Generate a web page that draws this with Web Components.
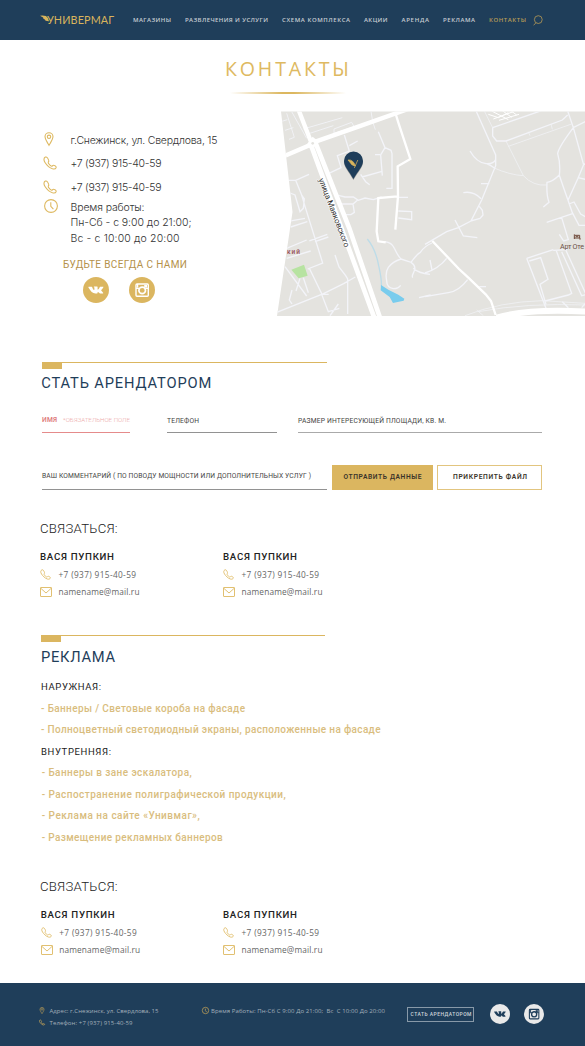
<!DOCTYPE html>
<html lang="ru">
<head>
<meta charset="utf-8">
<title>Универмаг — Контакты</title>
<style>
html,body{margin:0;padding:0}
body{width:585px;background:#fff;font-family:Roboto,"Liberation Sans",sans-serif;color:#333;overflow-x:hidden}
</style>
</head>
<body>
<site-header></site-header>
<page-title>КОНТАКТЫ</page-title>
<contact-info></contact-info>
<section-heading style="--top:46px;--x:42px;--w:285px" width="170">СТАТЬ АРЕНДАТОРОМ</section-heading>
<lease-form></lease-form>
<contact-block style="--top:28px"></contact-block>
<section-heading style="--top:35px;--x:41px;--w:284px;--gap:5px;--tx:0" width="74">РЕКЛАМА</section-heading>
<ad-list></ad-list>
<contact-block style="--top:28px;--shift:.7px"></contact-block>
<site-footer></site-footer>

<script>
const define = (name, html, init) => customElements.define(name, class extends HTMLElement {
  constructor() {
    super();
    const t = document.createElement('template');
    t.innerHTML = html;
    this.attachShadow({mode: 'open'}).append(t.content.cloneNode(true));
  }
  connectedCallback() { if (init) init(this, this.shadowRoot); }
});
const line = (text, width, cls = '') => `<tracked-text width="${width}" class="${cls}">${text}</tracked-text>`;

define('site-header', `
<style>
:host{display:flex;height:40px;box-sizing:border-box;padding-left:40px;background:#1f3e5a;align-items:center}
.logo{display:flex;width:74px;height:12px;margin-right:19px;align-items:center;color:#d9b45c;font:400 10.800px/12px Lato,sans-serif}
.logo svg{width:11px;height:9px;margin-right:-4px;margin-top:-2px}
nav{display:flex;gap:14px;font:600 6px/10px "Open Sans",sans-serif;color:#c5ccd2;width:400px}
.on{color:#b79b57}
svg.s{width:10px;height:11px}
</style>
<div class="logo"><svg viewBox="0 0 11 9"><path d="M0 .7Q3 .4 6 .9 8.500 2.400 9 6.300 5.500 6.500 4.300 4.600L5.300 4.600Q3.200 3.800 2.600 2.500L3.700 2.600Q1.700 1.500 0 .7Z" fill="#d9b45c"/></svg>${line('УНИВЕРМАГ', 67)}</div>
<nav>${line('МАГАЗИНЫ',38)}${line('РАЗВЛЕЧЕНИЯ И УСЛУГИ',83)}${line('СХЕМА КОМПЛЕКСА',68)}${line('АКЦИИ',23.500)}${line('АРЕНДА',27.500)}${line('РЕКЛАМА',32)}${line('КОНТАКТЫ',37,'on')}</nav>
<svg class="s" viewBox="0 0 10 11" fill="none" stroke="#b79b57" stroke-width=".8"><circle cx="5.300" cy="4.600" r="3.900"/><path d="M3 7.700.6 10.300"/></svg>`);

define('page-title', `
<style>
:host{display:block;height:71px;padding-top:16px;box-sizing:border-box}
.t{display:flex;justify-content:center;font:400 19.600px/26px "Open Sans",sans-serif;color:#deb961;padding-right:11px}
i{display:block;width:116px;height:2px;margin:10px 0 0 230px;background:linear-gradient(90deg,#fff,#dcb75f 45%,#dcb75f 55%,#fff)}
</style><div class="t"><tracked-text width="124"><slot></slot></tracked-text></div><i></i>`);

const icons = {
  pin: ['0 0 10 14', '<path d="M5 13.300C3 9.800 1 7.500 1 4.800a4 4 0 0 1 8 0C9 7.500 7 9.800 5 13.300Z"/><circle cx="5" cy="4.800" r="1.700"/>'],
  phone: ['0 0 14 14', '<path d="M2.400 1.100C.6 2 .5 4.200 2 6.500s4.300 5.300 7.500 6.300c1.800.5 3.200-.1 3.700-1.300.2-.8-.6-1.400-1.600-1.900-1-.6-1.700-.4-2.200.3-.4.7-1.200.4-2.400-.7C5.700 7.900 4.900 6.900 5.200 6.100c.6-.4.9-.8.5-1.700C5 2.400 3.900.4 2.400 1.100Z"/>'],
  clock: ['0 0 14 14', '<circle cx="7" cy="7" r="6.400"/><path d="M6.800 3.300v4l2.600 2.800"/>'],
  mail: ['0 0 12 10', '<rect x=".5" y=".5" width="11" height="9" rx=".4"/><path d="m.8 1.300 5.200 4.700 5.200-4.700"/>']
};
define('ui-icon', `<style>:host{display:block;width:14px;height:14px;color:#deb961}svg{display:block;width:100%;height:100%;overflow:visible}</style>`, (el, root) => {
  const [box, body] = icons[el.getAttribute('name')];
  root.innerHTML += `<svg viewBox="${box}" fill="none" stroke="currentColor" stroke-width="${el.getAttribute('stroke') || 1.1}">${body}</svg>`;
});

define('social-badge', `<style>
:host{display:block;width:26px;height:26px;border-radius:50%;background:var(--bg,#dbb660)}
svg{display:block;width:100%;height:100%;color:var(--fg,#fff)}
</style>`, (el, root) => {
  const vk = `<path fill="currentColor" d="M6 9.700h2.700c.3 0 .4.200.5.500.6 1.600 1.500 2.900 1.900 2.900.3 0 .3-.3.300-.8v-1.500c0-.6-.3-.7-.7-.9.2-.4.5-.5 1.100-.5h2.200c.5 0 .6.200.600.700v2.200c0 .3.100.5.400.3.600-.4 1.300-1.500 1.700-2.400.2-.4.4-.5.700-.5H20c.6 0 .5.4.1 1-.5.900-1.200 1.700-1.800 2.400-.2.300-.2.400.1.700.6.600 1.300 1.200 1.700 1.900.3.500.1.800-.4.800h-2.400c-.6 0-.8-.3-1.200-.7-.5-.5-.9-1-1.200-.9-.4.1-.3.700-.4 1.100-.1.400-.300.500-.800.500h-1.300c-2.700 0-4.900-2.500-6.800-5.800-.3-.5-.3-1 .4-1Z"/>`;
  const ig = `<rect x="7" y="7" width="12.300" height="12.300" rx="1" fill="none" stroke="currentColor" stroke-width="1.400"/><circle cx="13.200" cy="13.400" r="3.300" fill="none" stroke="currentColor" stroke-width="1.700"/><path stroke="currentColor" stroke-width="1.300" d="M7 11.300h3.300M16.200 11.300h3M8.600 7v3.500"/><path d="M15.200 8h2.800v2.600h-2.800z" fill="currentColor"/>`;
  root.innerHTML += `<svg viewBox="0 0 26 26">${el.getAttribute('name') === 'vk' ? vk : ig}</svg>`;
});

define('contact-info', `
<style>
:host{display:grid;grid-template-columns:277px 308px;height:205px}
.l{padding:20px 0 0 43px;font:300 10.500px/20px Inter,"Open Sans",sans-serif;color:#333}
.r{display:grid;grid-template-columns:27.500px 1fr;height:23.300px}
.r ui-icon{margin-top:2px}
.r ui-icon[name=pin]{width:10px;margin:1px 0 0 1px}
.r.h{height:48px;line-height:15.400px;margin-top:-1px}
.r.h ui-icon{margin:-1px 0 0 1px}
.s{font:400 10px/14px Roboto,sans-serif;color:#b4914a;padding-left:20px;margin-top:10px}
.b{display:flex;gap:20px;padding:5px 0 0 40px}
</style>
<div class="l">
<div class="r"><ui-icon name="pin"></ui-icon>${line('г.Снежинск, ул. Свердлова, 15',147)}</div>
<div class="r"><ui-icon name="phone"></ui-icon>${line('+7 (937) 915-40-59',91)}</div>
<div class="r"><ui-icon name="phone"></ui-icon>${line('+7 (937) 915-40-59',91)}</div>
<div class="r h"><ui-icon name="clock"></ui-icon><div>${line('Время работы:',74)}${line('Пн-Сб - с 9:00 до 21:00;',121)}${line('Вс - с 10:00 до 20:00',109)}</div></div>
<div class="s">${line('БУДЬТЕ ВСЕГДА С НАМИ',124)}</div>
<div class="b"><social-badge name="vk"></social-badge><social-badge name="ig"></social-badge></div>
</div>
<area-map></area-map>`);

define('area-map', `
<style>:host{display:block;height:205px}svg{display:block;width:308px;height:205px}</style>
<svg viewBox="0 0 308 205">
<defs><clipPath id="c"><path d="M4 .5H308V205H0L15.500 101Z"/></clipPath></defs>
<g clip-path="url(#c)">
<rect width="308" height="205" fill="#e4e3df"/>
<g transform="translate(-7,-6) scale(.33333)" fill="none" stroke="#f3f4f9" stroke-width="4">
<path stroke-width="2.500" d="M50 25 65 72 73 97 57 103M32 50l20-6M45 76l25-8M65 20 110 100M100 72 217 38M110 88 190 62M192 85V72L245 52 255 70M192 85 250 66 247 78M290 58 308 50 303 18M308 50l8 24"/>
<path d="M223 90 238 138 202 152 213 188 175 206M238 122l25-14M325 80 345 128 332 150 337 212M315 149h15M345 128l18 8 3 10V250h-17M272 208l15 22 12 9M276 216l60-17M55 226h22l40-18M77 226l18 44 10 34 53 170-45 18M95 270l8 12-3 28-10 10-15-50-15-6M50 350l55-10M62 366l50-16M118 408l54-20M135 410l40-14M50 430l60-25M50 460l72-22M45 485l65 88M90 520l-12 38M100 518l15 45M66 555l-8 30 8 12M118 490l38 78 65-32 35-20M20 622 155 568 175 620 208 610M158 568h18M180 632l25-35M195 450l12 36 20 26 6 10v105M205 271l20 5h25l15 10 20-7 25 5 25-8M213 297h36l14-12M249 297l4 25-10 7h-22M385 318l40 2v24l-40-5M380 277h34M345 410q20 2 28 20 12 25 20 32-25 8-38 25-10 15-5 40 0 20 20 24 15 0 22-10M393 462l30 10q18-25 28-30 14-20 35-28M423 472q18 12 8 30-6 12-3 16M430 490q15 15 50 18M447 578l35-8"/>
<path stroke="#fff" stroke-width="7" d="M378 30l8 26 35 106-38 22 1 90-8 100M382 274l-57 5-5 100 5 30 22 3"/>
<path stroke="#fff" stroke-width="13" d="M45 152 115 122 M130 112 265 65 420 10M80 0 122 108"/>
<path stroke="#fff" stroke-width="32" d="M118 108 136 122"/>
<path stroke="#fff" stroke-width="14" d="M120 112 315 644M136 112 238 370 332 644"/>
<path stroke="#bddce8" d="M292 402q25 30 34 80 10 45 8 62"/>
<path fill="#79cced" stroke="none" d="m333 540 22 14 30 15 18 12-2 6-32 7-10-18-27-20Z"/>
<path fill="#b7e3a1" stroke="none" d="m64 494 38-15 11 33-27 8Z"/>
<circle cx="128" cy="115" r="4" fill="#e4e3df" stroke="none"/>
</g>
<g transform="translate(148,-6) scale(.33333)" fill="none" stroke="#f3f4f9" stroke-width="4">
<path d="M152 15 212 150V182L170 285 138 348 165 340 174 330 172 316 163 304M135 138q20 35 48 38 22 2 29-12M185 176q14 6 22 12M168 236h25M115 263q30-6 53 18M90 345l25 48 42 5M138 348l-38 20-35 12-65 38M65 460Q42 490 0 504M15 465l6 30M128 524Q100 560 70 563L0 575M163 545h20M203 68 398 0M203 68v25l12 15h28L412 45l16-15M427 15 445 68 485 48M445 68q-45 60-47 78 9 30 5 65 10 30 25 72l14 40 20 38h20M445 68l30 108 10 4M477 176l-18 44-30 66M459 218l26 6M365 352l80-27M432 297l15-6 20 36 18 10M403 210q-20 20-37 22-2 38 6 60l-17 14M410 338l20 66-14 4-13-20M385 436l42-2M305 460l80-26M305 460l58 150M313 468l34-10 22 65-24 15 18 60M360 588l70-18 10-5-46-128M410 440l60 132 20-5M420 430l65 142M412 590l18 18M470 608l10-12"/>
<path stroke-width="2" d="M178 18l26 52M243 108l52 104M250 124 440 57M310 80l5 12M378 57l4 16M205 188q50 22 90 24 30 32 70 28M120 632q105-42 232-45l128 8M155 615l20 17M160 620q145-27 325-20"/>
<path stroke="#fff" stroke-width="3" d="M190 28l30 10 30-15M205 42l60-22M222 46l60-18M200 18l50 26M225 12l35 25M245 8l30 22"/>
<path stroke="#fff" stroke-width="7" d="M22 408l80 84 28 26 52 50 16 20 14 42"/>
<path stroke="#fff" stroke-width="18" d="M215 638Q310 610 485 620"/>
<path stroke="#6c4636" stroke-width="3" d="M448 388v14M448 399h17v5M450 391h14v8M452 395h8"/>
</g>
<path fill="#1f3e5a" d="M76.400 68C72 60 67 55.500 67 50a9.500 9.500 0 0 1 19 0c0 5.500-5 10-9.600 18Z" style="filter:drop-shadow(.5px 1px .7px #0005)"/>
<path d="M71 49q5-.8 7.500 6-4-.5-5-3ZM80.800 49l-3.500 8" fill="#d9b45c" stroke="#d9b45c" stroke-width=".7"/>
<g font-family="Roboto,sans-serif">
<text transform="translate(41.500,68.500) rotate(69)" font-size="8" fill="#333" stroke="#fff" stroke-width="1" paint-order="stroke" textLength="73">улица Маяковского</text>
<text x="10" y="142.500" font-size="6.500" font-weight="500" fill="#98525a" textLength="13">кий</text>
<text x="283" y="138" font-size="7.200" fill="#6d5148" textLength="24">Арт Оте</text>
</g></g></svg>`);

define('section-heading', `
<style>
:host{display:block;padding:var(--top) 0 0 var(--x)}
.r{width:var(--w);height:7px;background:linear-gradient(#dbb660,#dbb660) 0 0/100% 1.400px no-repeat}
.r i{display:block;width:20px;height:6.500px;background:#dbb660}
.t{font:400 14.700px/20px Roboto,sans-serif;color:#1f3e5a;margin:var(--gap,4px) 0 0 var(--tx,-.7px)}
</style><div class="r"><i></i></div><div class="t"><tracked-text><slot></slot></tracked-text></div>`,
(el, root) => root.querySelector('tracked-text').setAttribute('width', el.getAttribute('width')));

define('lease-form', `
<style>
:host{display:block;padding:21px 0 0 42px;font:400 6.700px/14px Roboto,sans-serif;color:#444}
.a{display:grid;grid-template-columns:88px 110px 244px;column-gap:37px;height:51px}
.a>:nth-child(3){margin-left:-16px;width:244px}
.f{height:18px;border-bottom:1px solid #929292}
.f.e{display:flex;gap:6px;color:#de7c7c;border-color:#e58b8b;height:17.500px;line-height:12px}
.e .n{font-weight:600}.e .q{font-weight:300;font-size:6.200px;color:#edaaaa}
.g{border-bottom-color:#aaa}
.b{display:grid;grid-template-columns:285px 102px 105px;height:25px}
.b .f{height:24px;line-height:22px}
.b{column-gap:4px}
.btn{display:grid;place-items:center;box-sizing:border-box;height:25px;line-height:13px;padding-bottom:1px;font-weight:600;color:#3a342a}
.p{background:#dbb660;margin-left:1px;width:101px}.o{border:1.300px solid #e2c57f;padding-left:1px}
</style>
<div class="a"><div class="f e">${line('ИМЯ',15,'n')}${line('*ОБЯЗАТЕЛЬНОЕ ПОЛЕ',67,'q')}</div><div class="f">${line('ТЕЛЕФОН',32)}</div><div class="f g">${line('РАЗМЕР ИНТЕРЕСУЮЩЕЙ ПЛОЩАДИ, КВ. М.',148)}</div></div>
<div class="b"><div class="f">${line('ВАШ КОММЕНТАРИЙ ( ПО ПОВОДУ МОЩНОСТИ ИЛИ ДОПОЛНИТЕЛЬНЫХ УСЛУГ )',269)}</div><div class="btn p">${line('ОТПРАВИТЬ ДАННЫЕ',78)}</div><div class="btn o">${line('ПРИКРЕПИТЬ ФАЙЛ',74)}</div></div>`);

define('contact-person', `
<style>
:host{display:block;font:400 8.300px/17px "Open Sans",sans-serif;color:#666}
.n{font:500 9.700px/20px Roboto,sans-serif;color:#222;height:19.500px}
.r{display:grid;grid-template-columns:18.500px 1fr;height:17px}
ui-icon{width:11px;height:11px;margin-top:3px}
ui-icon[name=mail]{width:12px;height:10px;margin-top:4px}
</style>
<div class="n">${line('ВАСЯ ПУПКИН',74)}</div>
<div class="r"><ui-icon name="phone"></ui-icon>${line('+7 (937) 915-40-59',77.500)}</div>
<div class="r"><ui-icon name="mail" stroke=".9"></ui-icon>${line('namename@mail.ru',81)}</div>`);

define('contact-block', `
<style>
:host{display:block;padding:var(--top) 0 0 40px}
.h{font:300 13.200px/22px Roboto,sans-serif;color:#222;height:28.500px}
.g{display:grid;grid-template-columns:183px 183px;padding-left:var(--shift,0)}
.g>:last-child{margin-left:calc(var(--shift,0px) * -1)}
</style>
<div class="h">${line('СВЯЗАТЬСЯ:',77.500)}</div><div class="g"><contact-person></contact-person><contact-person></contact-person></div>`);

define('ad-list', `
<style>
:host{display:block;padding:9px 0 0 41px;height:172px;font:500 10px/21.500px Roboto,sans-serif;color:#d9bd7e}
.h{font-weight:400;font-size:9.500px;color:#222}
.in{padding-left:.7px}
</style>
${line('НАРУЖНАЯ:',60,'h')}${line('- Баннеры / Световые короба на фасаде',204)}${line('- Полноцветный светодиодный экраны, расположенные на фасаде',339.500)}
${line('ВНУТРЕННЯЯ:',70,'h')}<div class="in">${line('- Баннеры в зане эскалатора,',150)}${line('- Распостранение полиграфической продукции,',244)}${line('- Реклама на сайте «Унивмаг»,',158)}${line('- Размещение рекламных баннеров',181)}</div>`);

define('site-footer', `
<style>
:host{display:grid;grid-template-columns:163px 205px 83px 34px 20px;box-sizing:border-box;padding:21.500px 0 0 39px;height:63px;margin-top:25px;background:#1f3e5a;font:400 6px/12px "Open Sans",sans-serif;color:#a3b0bb}
.r{display:flex;height:12px}
ui-icon{width:6px;height:7px;margin:2.500px 4.500px 0 0;color:#b79b57}
.c ui-icon{width:7px;margin-right:2px}
.b{box-sizing:border-box;width:67px;height:15px;margin-top:2px;border:1px solid #8899a8;font:500 5px/13px Roboto,sans-serif;color:#ced5da;padding-left:2.500px}
social-badge{width:20px;height:20px;--bg:#e9e9e9;--fg:#1f3e5a;margin-top:-.5px}
</style>
<div><div class="r"><ui-icon name="pin" stroke="1.300"></ui-icon>${line('Адрес: г.Снежинск, ул. Свердлова, 15',109)}</div><div class="r"><ui-icon name="phone" stroke="1.800"></ui-icon>${line('Телефон: +7 (937) 915-40-59',83)}</div></div>
<div class="r c"><ui-icon name="clock" stroke="1.600"></ui-icon>${line('Время Работы: Пн-Сб С 9:00 До 21:00;&nbsp; Вс&nbsp; С 10:00 До 20:00',174)}</div>
<div class="b">${line('СТАТЬ АРЕНДАТОРОМ',61)}</div>
<social-badge name="vk"></social-badge><social-badge name="ig"></social-badge>`);

/* Single line of text whose letter spacing is set so that it fills the given width. */
define('tracked-text', `<style>:host{display:block;white-space:nowrap}span{display:inline-block;line-height:inherit;vertical-align:top}</style><span><slot></slot></span>`, (el, root) => {
  const width = parseFloat(el.getAttribute('width'));
  const span = root.querySelector('span');
  const host = el.getRootNode().host;
  const text = el.textContent.trim() || (host ? host.textContent.trim() : '');
  const gap = (width - span.getBoundingClientRect().width) / (text.length - 1);
  span.style.letterSpacing = gap + 'px';
  span.style.marginRight = -gap + 'px';
});
</script>
</body>
</html>
